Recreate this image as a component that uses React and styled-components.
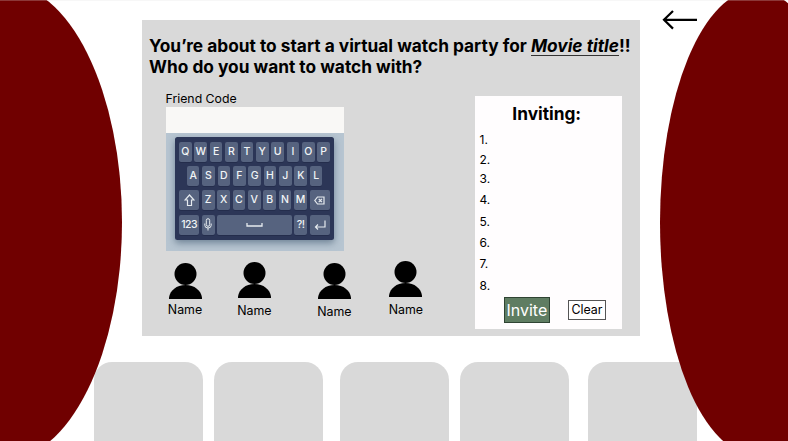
import React from "react";
import styled, { createGlobalStyle } from "styled-components";

const GlobalStyle = createGlobalStyle`
  *, *::before, *::after { box-sizing: border-box; }
  body { margin: 0; background: #fff; color: #000; font-family: Inter, "Liberation Sans", sans-serif; }
`;

const Stage = styled.main`
  position: relative;
  width: 788px;
  height: 441px;
  overflow: hidden;
  background: #fff;
  &::after {
    content: "";
    position: absolute;
    inset: 0 0 auto;
    height: 1px;
    background: rgba(225, 225, 225, 0.25);
  }
`;

const Curtain = styled.div`
  position: absolute;
  left: ${(p) => p.$left}px;
  top: ${(p) => p.$top}px;
  width: ${(p) => p.$width}px;
  height: ${(p) => p.$height}px;
  border-radius: 50%;
  background: #700000;
`;

const TopArea = styled.div`
  display: flex;
  align-items: flex-start;
  padding: 0 0 0 142px;
  height: 361.5px;
`;

const Panel = styled.section`
  width: 497.5px;
  height: 316px;
  margin-top: 20px;
  padding: 15.4px 0 0 7px;
  background: #d9d9d9;
`;

const BackButton = styled.button`
  margin: 9px 0 0 22px;
  padding: 0;
  border: 0;
  background: none;
  line-height: 0;
`;

const Heading = styled.h1`
  margin: 0 0 0.6px;
  font-size: 17.3px;
  line-height: 21px;
  font-weight: 700;
  white-space: nowrap;
`;

const MovieTitle = styled.em`
  display: inline-block;
  height: 21px;
  border-bottom: 1px solid #333;
`;

const Columns = styled.div`
  display: flex;
  justify-content: space-between;
  padding: 0 17.5px 0 16.5px;
`;

const Friends = styled.div`
  padding-top: 13px;
`;

const Label = styled.label`
  display: block;
  height: 16px;
  font-size: 12.3px;
  line-height: 16px;
`;

const CodeInput = styled.div`
  width: 178px;
  height: 26px;
  background: #f9f8f6;
`;

const KeyboardFrame = styled.div`
  width: 178px;
  height: 118px;
  padding: 4px 9.5px 0;
  overflow: hidden;
  background: #b7c5d1;
`;

const Keyboard = styled.div`
  display: flex;
  flex-direction: column;
  gap: 4.3px;
  height: 103px;
  padding: 4.7px 4px 0;
  border-radius: 2.5px;
  background: #2c3657;
  box-shadow: 0 3px 7px rgba(65, 88, 112, 0.6);
`;

const KeyRow = styled.div`
  display: flex;
  gap: 2.7px;
  padding-left: ${(p) => p.$indent || 0}px;
`;

const Key = styled.span`
  display: flex;
  align-items: center;
  justify-content: center;
  flex: none;
  width: ${(p) => p.$width || 12.7}px;
  height: 20px;
  border-radius: 2px;
  background: #56637f;
  box-shadow: 0 0.7px 0 #222b49;
  color: #f1f4f6;
  font-size: 10.5px;
  font-weight: 500;
  line-height: 20px;
  letter-spacing: ${(p) => p.$tracking || 0}px;
`;

const FriendRow = styled.div`
  display: flex;
  width: 262px;
  padding: 8.5px 0 0 2px;
`;

const Friend = styled.div`
  display: flex;
  flex-direction: column;
  align-items: center;
  gap: ${(p) => p.$gap}px;
  width: 35px;
  margin: ${(p) => p.$drop}px ${(p) => p.$after}px 0 0;
  font-size: 12.4px;
  line-height: 15px;
`;

const InviteCard = styled.aside`
  width: 147px;
  height: 233px;
  margin-top: 18px;
  padding-top: 7px;
  background: #fffdfe;
`;

const InviteTitle = styled.h2`
  margin: 0 0 15.2px;
  padding-right: 3.5px;
  font-size: 17.28px;
  line-height: 22px;
  text-align: center;
`;

const Slots = styled.ol`
  height: 157px;
  margin: 0;
  padding: 0 0 0 4.5px;
  list-style: none;
`;

const Slot = styled.li`
  height: ${(p) => p.$height}px;
  font-size: 12px;
  line-height: 0;
`;

const Actions = styled.div`
  display: flex;
  align-items: center;
  gap: 18px;
  padding-left: 28.9px;
`;

const ActionButton = styled.button`
  width: ${(p) => (p.$primary ? 46 : 38)}px;
  height: ${(p) => (p.$primary ? 26 : 20)}px;
  padding: 0;
  border: 1px solid ${(p) => (p.$primary ? "#2f4433" : "#555")};
  background: ${(p) => (p.$primary ? "#5f7d62" : "#fff")};
  color: ${(p) => (p.$primary ? "#fff" : "#000")};
  font-family: inherit;
  font-size: ${(p) => (p.$primary ? 16 : 12.4)}px;
  line-height: 1;
  white-space: nowrap;
`;

const Seats = styled.div`
  display: flex;
  padding-left: 94px;
`;

const Seat = styled.div`
  flex: none;
  width: 109px;
  height: 100px;
  margin-right: ${(p) => p.$after}px;
  border-radius: 18px;
  background: #d9d9d9;
`;

const Line = ({ w, h, children, sw = 1 }) => (
  <svg width={w} height={h} viewBox={`0 0 ${w} ${h}`} fill="none" stroke="#e6ebef" strokeWidth={sw}>
    {children}
  </svg>
);

const Person = () => (
  <svg width="33" height="36" viewBox="0 0 33 36">
    <circle cx="16.5" cy="11" r="11" />
    <path d="M0 36V34.5C1 27.5 7.5 22 16.5 22S32 27.5 33 34.5V36Z" />
  </svg>
);

const letters = (s) => s.split("").map((c) => <Key key={c}>{c}</Key>);

const friends = [
  { drop: 4, after: 34.4, gap: 3 },
  { drop: 3, after: 45, gap: 4.5 },
  { drop: 3.5, after: 36.5, gap: 5.5 },
  { drop: 1.5, after: 0, gap: 5.5 },
];
const slotHeights = [19.5, 19.5, 21, 22, 21, 21, 22, 10];
const seatGaps = [10.5, 17, 11.5, 18.5, 0];

export default function App() {
  return (
    <>
      <GlobalStyle />
      <Stage>
        <TopArea>
          <Panel>
            <Heading>
              You’re about to start a virtual watch party for <MovieTitle>Movie title</MovieTitle>!!
              <br />
              Who do you want to watch with?
            </Heading>
            <Columns>
              <Friends>
                <Label>Friend Code</Label>
                <CodeInput />
                <KeyboardFrame>
                  <Keyboard>
                    <KeyRow>{letters("QWERTYUIOP")}</KeyRow>
                    <KeyRow $indent={7.8}>{letters("ASDFGHJKL")}</KeyRow>
                    <KeyRow>
                      <Key $width={20.2}>
                        <Line w={11} h={13} sw={1.2}>
                          <path d="M5.5 1L10 6H7.5V11.5H3.5V6H1Z" />
                        </Line>
                      </Key>
                      {letters("ZXCVBNM")}
                      <Key $width={20.2}>
                        <Line w={11} h={9} sw={1.2}>
                          <path d="M3.5 1H10V8H3.5L.8 4.5ZM4.7 2.8L8 6.2M8 2.8L4.7 6.2" />
                        </Line>
                      </Key>
                    </KeyRow>
                    <KeyRow>
                      <Key $width={20.2} $tracking={-0.5}>123</Key>
                      <Key>
                        <Line w={8} h={13}>
                          <rect x="2.3" y=".7" width="3.4" height="7.6" rx="1.7" />
                          <path d="M.8 5.5V7.3Q.8 10 4 10T7.2 7.3V5.5M4 10V12.5" />
                        </Line>
                      </Key>
                      <Key $width={74.3}>
                        <Line w={17} h={5} sw={1.3}>
                          <path d="M1 1V4H16V1" />
                        </Line>
                      </Key>
                      <Key $tracking={-0.5}>?!</Key>
                      <Key $width={20.2}>
                        <Line w={12} h={10} sw={1.2}>
                          <path d="M11 .5V7H1.5M4 4.5L1.5 7L4 9.5" />
                        </Line>
                      </Key>
                    </KeyRow>
                  </Keyboard>
                </KeyboardFrame>
                <FriendRow>
                  {friends.map((f, i) => (
                    <Friend key={i} $drop={f.drop} $after={f.after} $gap={f.gap}>
                      <Person />
                      Name
                    </Friend>
                  ))}
                </FriendRow>
              </Friends>
              <InviteCard>
                <InviteTitle>Inviting:</InviteTitle>
                <Slots>
                  {slotHeights.map((h, i) => (
                    <Slot key={i} $height={h}>{i + 1}.</Slot>
                  ))}
                </Slots>
                <Actions>
                  <ActionButton $primary>Invite</ActionButton>
                  <ActionButton>Clear</ActionButton>
                </Actions>
              </InviteCard>
            </Columns>
          </Panel>
          <BackButton aria-label="Back">
            <svg width="36" height="21" viewBox="0 0 36 21" fill="none" stroke="#000" strokeWidth="2.2">
              <path d="M35 10.8H2M11 2L2 10.8L11 19.6" />
            </svg>
          </BackButton>
        </TopArea>
        <Seats>
          {seatGaps.map((g, i) => (
            <Seat key={i} $after={g} />
          ))}
        </Seats>
        <Curtain $left={-114} $top={-16} $width={236} $height={476} />
        <Curtain $left={660} $top={-10.5} $width={192} $height={465} />
      </Stage>
    </>
  );
}
